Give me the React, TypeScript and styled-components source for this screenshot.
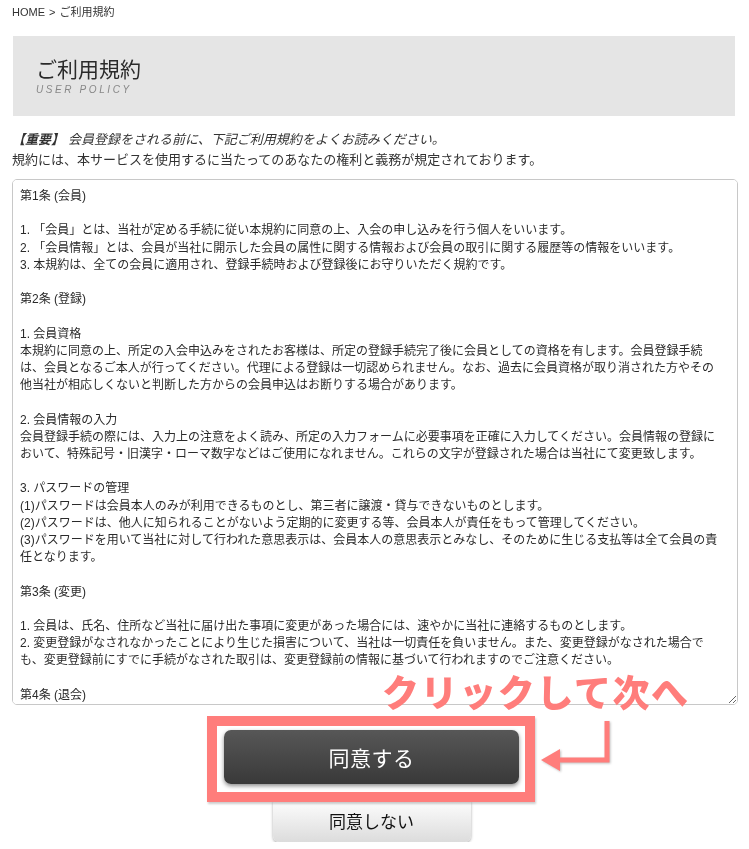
import styled, { createGlobalStyle } from 'styled-components';

const GlobalStyle = createGlobalStyle`
  html, body {
    margin: 0;
    padding: 0;
    background: #fff;
  }
  body {
    font-family: "Liberation Sans", "Noto Sans CJK JP", sans-serif;
    color: #333;
  }
`;

const Page = styled.div`
  padding: 0 11px 0 12px;
`;

const Breadcrumb = styled.div`
  display: flex;
  gap: 4px;
  padding-top: 5px;
  font-size: 11px;
  line-height: 14px;
  color: #333;
`;

const PageHeader = styled.div`
  margin: 17px 3px 0 1px;
  height: 80px;
  box-sizing: border-box;
  padding: 19px 0 0 23px;
  background: #e5e5e5;
`;

const PageTitle = styled.h1`
  margin: 0;
  font-family: "Noto Sans CJK JP", sans-serif;
  font-size: 21px;
  font-weight: 400;
  line-height: 26px;
  color: #2a2a2a;
`;

const PageSubtitle = styled.div`
  margin-top: 2px;
  font-size: 10px;
  line-height: 14px;
  font-style: italic;
  letter-spacing: 2.6px;
  color: #888;
`;

const Notice = styled.div`
  margin-top: 13px;
  font-family: "Noto Sans CJK JP", sans-serif;
  font-size: 13px;
  line-height: 19.5px;
  color: #333;
`;

const NoticeLead = styled.p`
  margin: 0;
  font-style: italic;
`;

const Important = styled.strong`
  font-weight: 700;
  margin-right: 4px;
`;

const NoticeLine = styled.p`
  margin: 0;
`;

const PolicyBox = styled.textarea`
  display: block;
  margin-top: 11px;
  width: 100%;
  height: 526px;
  box-sizing: border-box;
  padding: 8px 7px;
  border: 1px solid #c8c8c8;
  border-radius: 5px;
  font-family: "Liberation Sans", "Noto Sans CJK JP", sans-serif;
  font-size: 12px;
  line-height: 17.2px;
  color: #2a2a2a;
  background: #fff;
  overflow: auto;
  scrollbar-width: none;
  &::-webkit-scrollbar {
    width: 0;
    height: 0;
  }
  &:focus {
    outline: none;
  }
`;

const Actions = styled.div`
  margin-top: 25px;
  display: flex;
  flex-direction: column;
  align-items: center;
  gap: 14px;
  padding-right: 7px;
`;

const AgreeWrap = styled.div`
  position: relative;
`;

const AgreeButton = styled.button`
  display: block;
  width: 295px;
  height: 54px;
  border: none;
  border-radius: 7px;
  background: linear-gradient(#575757, #393939);
  box-shadow: 0 2px 4px rgba(0, 0, 0, 0.45);
  color: #fff;
  font-family: "Noto Sans CJK JP", sans-serif;
  font-size: 21px;
  font-weight: 400;
  letter-spacing: 0.5px;
  cursor: pointer;
`;

const DisagreeButton = styled.button`
  display: block;
  width: 198px;
  height: 44px;
  border: none;
  border-radius: 6px;
  background: linear-gradient(#ffffff, #dcdcdc);
  box-shadow: 0 1px 3px rgba(0, 0, 0, 0.35);
  color: #111;
  font-family: "Noto Sans CJK JP", sans-serif;
  font-size: 17px;
  cursor: pointer;
`;

/* annotation overlays drawn on top of the screenshot */
const Highlight = styled.div`
  position: absolute;
  top: -14px;
  left: -17px;
  right: -16px;
  bottom: -18px;
  border: 10px solid #ff7d7b;
  box-shadow: 1px 2px 2px rgba(0, 0, 0, 0.2);
  pointer-events: none;
  z-index: 2;
`;

const Callout = styled.div`
  position: absolute;
  top: -57px;
  left: 158px;
  white-space: nowrap;
  font-family: "Noto Sans CJK JP", sans-serif;
  font-size: 37px;
  font-weight: 900;
  line-height: 1;
  letter-spacing: 1.6px;
  color: #ff7d7b;
  pointer-events: none;
  z-index: 2;
`;

const Arrow = styled.svg`
  position: absolute;
  top: -12px;
  left: 314px;
  filter: drop-shadow(1px 1px 1px rgba(0, 0, 0, 0.25));
  pointer-events: none;
  z-index: 2;
`;

const POLICY_TEXT = `第1条 (会員)

1. 「会員」とは、当社が定める手続に従い本規約に同意の上、入会の申し込みを行う個人をいいます。
2. 「会員情報」とは、会員が当社に開示した会員の属性に関する情報および会員の取引に関する履歴等の情報をいいます。
3. 本規約は、全ての会員に適用され、登録手続時および登録後にお守りいただく規約です。

第2条 (登録)

1. 会員資格
本規約に同意の上、所定の入会申込みをされたお客様は、所定の登録手続完了後に会員としての資格を有します。会員登録手続
は、会員となるご本人が行ってください。代理による登録は一切認められません。なお、過去に会員資格が取り消された方やその
他当社が相応しくないと判断した方からの会員申込はお断りする場合があります。

2. 会員情報の入力
会員登録手続の際には、入力上の注意をよく読み、所定の入力フォームに必要事項を正確に入力してください。会員情報の登録に
おいて、特殊記号・旧漢字・ローマ数字などはご使用になれません。これらの文字が登録された場合は当社にて変更致します。

3. パスワードの管理
(1)パスワードは会員本人のみが利用できるものとし、第三者に譲渡・貸与できないものとします。
(2)パスワードは、他人に知られることがないよう定期的に変更する等、会員本人が責任をもって管理してください。
(3)パスワードを用いて当社に対して行われた意思表示は、会員本人の意思表示とみなし、そのために生じる支払等は全て会員の責
任となります。

第3条 (変更)

1. 会員は、氏名、住所など当社に届け出た事項に変更があった場合には、速やかに当社に連絡するものとします。
2. 変更登録がなされなかったことにより生じた損害について、当社は一切責任を負いません。また、変更登録がなされた場合で
も、変更登録前にすでに手続がなされた取引は、変更登録前の情報に基づいて行われますのでご注意ください。

第4条 (退会)

1. 会員が退会を希望する場合には、会員本人が退会手続きを行ってください。所定の退会手続の終了後に、退会となります。

第5条 (会員資格の喪失及び賠償義務)

1. 会員が、会員資格取得申込の際に虚偽の申告をしたとき、通信販売による代金支払債務を怠ったとき、その他当社が会員と
して不適当と認める事由があるときは、当社は、会員資格を取り消すことができることとします。`;

export default function App() {
  return (
    <>
      <GlobalStyle />
      <Page>
        <Breadcrumb>
          <span>HOME</span>
          <span>&gt;</span>
          <span>ご利用規約</span>
        </Breadcrumb>

        <PageHeader>
          <PageTitle>ご利用規約</PageTitle>
          <PageSubtitle>USER POLICY</PageSubtitle>
        </PageHeader>

        <Notice>
          <NoticeLead>
            <Important>【重要】</Important>
            会員登録をされる前に、下記ご利用規約をよくお読みください。
          </NoticeLead>
          <NoticeLine>
            規約には、本サービスを使用するに当たってのあなたの権利と義務が規定されております。
          </NoticeLine>
        </Notice>

        <PolicyBox readOnly wrap="off" defaultValue={POLICY_TEXT} />

        <Actions>
          <AgreeWrap>
            <AgreeButton type="button">同意する</AgreeButton>
            <Highlight />
            <Callout>クリックして次へ</Callout>
            <Arrow width="74" height="56" viewBox="0 0 74 56">
              <path d="M69 3 V42 H20" fill="none" stroke="#ff7d7b" strokeWidth="5" />
              <polygon points="3,42 22,31 22,53" fill="#ff7d7b" />
            </Arrow>
          </AgreeWrap>
          <DisagreeButton type="button">同意しない</DisagreeButton>
        </Actions>
      </Page>
    </>
  );
}
